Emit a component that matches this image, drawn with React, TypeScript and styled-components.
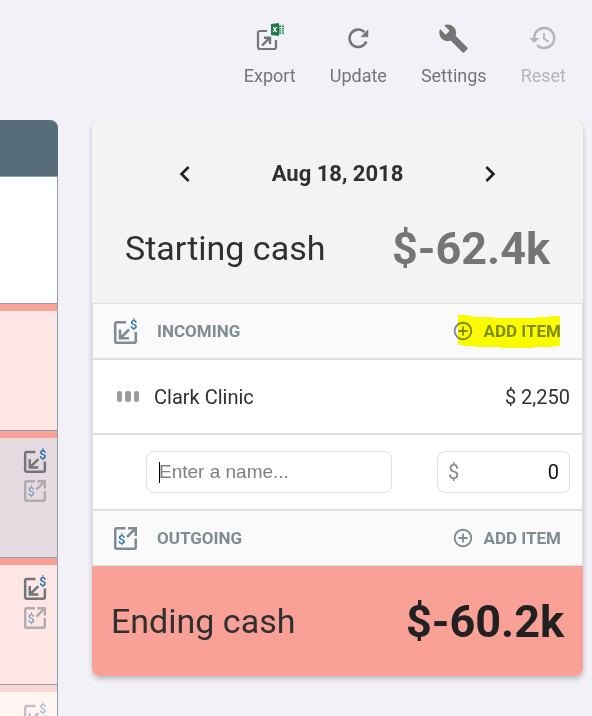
import React from "react";
import styled, { createGlobalStyle } from "styled-components";
import {
  MdAddCircleOutline,
  MdBuild,
  MdChevronLeft,
  MdChevronRight,
  MdHistory,
} from "react-icons/md";

const GlobalStyle = createGlobalStyle`
  * { box-sizing: border-box; }
  body { margin: 0; background: #f2f1f7; font-family: Roboto, "Liberation Sans", sans-serif; color: #303030; }
  button { font: inherit; color: inherit; background: none; border: 0; padding: 0; cursor: pointer; }
  svg { display: block; flex: none; }
`;

const Page = styled.div`
  display: flex;
  flex-direction: column;
  height: 100vh;
  overflow: hidden;
`;

const Toolbar = styled.header`
  display: flex;
  flex: none;
  justify-content: flex-end;
  gap: 34px;
  height: 120px;
  padding: 20px 26px 0 0;
`;

const ToolButton = styled.button`
  && {
    display: flex;
    flex-direction: column;
    align-items: center;
    align-self: flex-start;
    gap: 8px;
    font-size: 18px;
    line-height: 24px;
    color: #757575;
  }
  &&:disabled {
    color: #b5b4b8;
    cursor: default;
  }
`;

const ToolIcon = styled.span`
  display: flex;
  align-items: center;
  justify-content: center;
  height: 36px;
`;

const Main = styled.main`
  display: flex;
  flex: 1;
  align-items: flex-start;
  gap: 34px;
  min-height: 0;
  padding-right: 9px;
`;

const Timeline = styled.section`
  flex: none;
  width: 58px;
  border-radius: 0 8px 0 0;
  overflow: hidden;
`;

const TimelineHead = styled.div`
  height: 56px;
  background: #566e79;
`;

const Day = styled.div<{ $bg: string; $bar?: string; $faded?: boolean }>`
  display: flex;
  flex-direction: column;
  align-items: flex-end;
  gap: 6px;
  height: 127px;
  padding: 17px 11px 0 0;
  border-top: 1px solid #90a0aa;
  border-right: 1px solid #90a0aa;
  background: ${(p) => p.$bg};
  ${(p) => p.$bar && `box-shadow: inset 0 7px 0 ${p.$bar};`}
  svg { opacity: ${(p) => (p.$faded ? 0.4 : 1)}; }
`;

const Panel = styled.section`
  flex: 1;
  border-radius: 8px;
  background: #f3f3f3;
  box-shadow: 0 3px 5px rgba(0, 0, 0, 0.22);
  overflow: hidden;
`;

const PanelHead = styled.div`
  height: 183px;
  padding-top: 34px;
`;

const DateNav = styled.div`
  display: flex;
  align-items: center;
  justify-content: space-between;
  height: 39px;
  padding: 0 77px;
  color: #212121;
`;

const DateTitle = styled.h1`
  margin: 0;
  font-size: 22px;
  line-height: 28px;
  font-weight: 700;
  color: #303030;
`;

const CashRow = styled.div<{ $ending?: boolean }>`
  display: flex;
  align-items: center;
  justify-content: space-between;
  height: 110px;
  padding: 0 ${(p) => (p.$ending ? 19 : 33)}px;
  background: ${(p) => (p.$ending ? "#f9a097" : "transparent")};
`;

const CashLabel = styled.span`
  font-size: 34px;
`;

const CashAmount = styled.strong<{ $color: string }>`
  font-size: 45px;
  font-weight: 700;
  color: ${(p) => p.$color};
`;

const Body = styled.div`
  border: 1px solid #dfdfdf;
  background: #fff;
`;

const SectionHead = styled.div`
  display: flex;
  align-items: center;
  height: 54px;
  padding: 0 21px;
  background: #fafafa;
  color: #7f8c94;
  font-size: 17px;
  font-weight: 700;
`;

const SectionTitle = styled.h2`
  flex: 1;
  margin: 0 0 0 20px;
  font-size: inherit;
  font-weight: inherit;
`;

const AddButton = styled.button`
  && {
    position: relative;
    display: flex;
    align-items: center;
    gap: 10px;
  }
`;

const Marker = styled.svg`
  position: absolute;
  top: -5px;
  right: 1px;
  mix-blend-mode: multiply;
  pointer-events: none;
`;

const ItemRow = styled.div`
  display: flex;
  align-items: center;
  height: 75px;
  padding: 0 12px 0 24px;
  border-top: 2px solid #dfdfdf;
  font-size: 20px;
`;

const ItemName = styled.span`
  flex: 1;
  margin-left: 14px;
`;

const EntryForm = styled.form`
  display: flex;
  gap: 45px;
  height: 78px;
  padding: 16px 12px 0 53px;
  border: solid #dfdfdf;
  border-width: 2px 0;
`;

const Field = styled.label<{ $fixed?: boolean }>`
  position: relative;
  display: flex;
  align-items: center;
  flex: ${(p) => (p.$fixed ? "0 0 133px" : "1")};
  min-width: 0;
  height: 42px;
  padding: 0 ${(p) => (p.$fixed ? 10 : 12)}px;
  border: 1px solid #dfdfdf;
  border-radius: 8px;
  color: #888;
  font-size: 20px;
`;

const Caret = styled.span`
  position: absolute;
  left: 12px;
  top: 10px;
  width: 1px;
  height: 21px;
  background: #000;
`;

const TextInput = styled.input<{ $number?: boolean }>`
  flex: 1;
  width: 0;
  padding: 0;
  border: 0;
  outline: 0;
  background: transparent;
  color: #111;
  font: ${(p) =>
    p.$number ? "20px Roboto, sans-serif" : '19px "Liberation Sans", sans-serif'};
  text-align: ${(p) => (p.$number ? "right" : "left")};
  &::placeholder { color: #808080; opacity: 1; }
`;

type MoneyIconProps = { color: string; size?: number; dollar?: string };

const IncomingIcon = ({ color, size = 23, dollar = "#2a72a8" }: MoneyIconProps) => (
  <svg width={size} height={size + 4} viewBox="0 0 23 27" overflow="visible" aria-hidden="true">
    <g fill="none" stroke={color} strokeWidth="2.6">
      <path d="M12 4.2H3Q1.2 4.2 1.2 6V23Q1.2 24.8 3 24.8H20Q21.8 24.8 21.8 23V14" />
      <path d="M15 11.5L6.5 20M6 11.5V20.3H15" />
    </g>
    <text x="16" y="11" fontSize="13" fontWeight="500" fill={dollar}>$</text>
  </svg>
);

const OutgoingIcon = ({ color, size = 23, dollar = "#2a72a8" }: MoneyIconProps) => (
  <svg width={size} height={size} viewBox="0 0 23 23" aria-hidden="true">
    <g fill="none" stroke={color} strokeWidth="2.6">
      <path d="M11.5 1.2H3Q1.2 1.2 1.2 3V20Q1.2 21.8 3 21.8H20Q21.8 21.8 21.8 20V11.5" />
      <path d="M13 10L21.2 1.8M14 1.2H21.8V9" />
    </g>
    <text x="4" y="17" fontSize="13" fontWeight="500" fill={dollar}>$</text>
  </svg>
);

const ExportIcon = () => (
  <svg width="28" height="32" viewBox="0 0 28 32" aria-hidden="true">
    <g fill="none" stroke="#757575" strokeWidth="2.2">
      <path d="M11 9H4Q2 9 2 11V25Q2 27 4 27H18Q20 27 20 25V18" />
      <path d="M6 23.5L13.5 16M8 15.8H14V22" strokeWidth="2.4" />
    </g>
    <path d="M22 2.5H28V12.5H22Z" fill="#cfe5da" />
    <path d="M23 3.5h2v1.5h-2zM26 3.5h2v1.5h-2zM23 6h2v1.3h-2zM26 6h2v1.3h-2zM23 8.2h2v1.3h-2zM26 8.2h2v1.3h-2zM23 10.5h2v1.3h-2zM26 10.5h2v1.3h-2z" fill="#2b8a5a" />
    <path d="M15 2L23 1V14L15 13Z" fill="#1f7c4d" />
    <path d="M17.2 5L20.5 10M20.5 5L17.2 10" stroke="#fff" strokeWidth="1.3" />
  </svg>
);

const RefreshIcon = () => (
  <svg width="22" height="22" viewBox="0 0 22 22" aria-hidden="true">
    <path d="M17.5 5.2A8.7 8.7 0 1 0 19.3 14.6" fill="none" stroke="#757575" strokeWidth="2.6" />
    <path d="M21 2.8V9.8H14Z" fill="#757575" stroke="#757575" strokeWidth=".6" strokeLinejoin="round" />
  </svg>
);

const GripIcon = () => (
  <svg width="23" height="11" viewBox="0 0 23 11" fill="#9a9a9a" aria-hidden="true">
    <rect width="5" height="11" rx="2" />
    <rect x="8" width="6" height="11" rx="2.5" />
    <rect x="17" width="5" height="11" rx="2" />
  </svg>
);

const tools = [
  { label: "Export", icon: <ExportIcon /> },
  { label: "Update", icon: <RefreshIcon /> },
  { label: "Settings", icon: <MdBuild size={31} /> },
  { label: "Reset", icon: <MdHistory size={30} />, disabled: true },
];

const days = [
  { bg: "#fff" },
  { bg: "#fde6e3", bar: "#f9a097" },
  { bg: "#e5dae0", bar: "#f9a097", icons: true },
  { bg: "#fde6e3", bar: "#f9a097", icons: true },
  { bg: "#fff5f3", bar: "#fcd6d2", icons: true, faded: true },
];

const SectionBar = ({ title, icon, marked }: { title: string; icon: React.ReactNode; marked?: boolean }) => (
  <SectionHead>
    {icon}
    <SectionTitle>{title}</SectionTitle>
    <AddButton type="button">
      <MdAddCircleOutline size={22} />
      ADD ITEM
      {marked && (
        <Marker width="102" height="33" viewBox="0 0 102 33" aria-hidden="true">
          <path
            fill="#ff0"
            d="M0 0H10L16 2H35V3H79V2H92V1H102V31H96V32H75V33H42V32H16V31H6V30H0Z"
          />
        </Marker>
      )}
    </AddButton>
  </SectionHead>
);

export default function App() {
  return (
    <Page>
      <GlobalStyle />
      <Toolbar>
        {tools.map((t) => (
          <ToolButton key={t.label} type="button" disabled={t.disabled}>
            <ToolIcon>{t.icon}</ToolIcon>
            {t.label}
          </ToolButton>
        ))}
      </Toolbar>
      <Main>
        <Timeline>
          <TimelineHead />
          {days.map((d, i) => (
            <Day key={i} $bg={d.bg} $bar={d.bar} $faded={d.faded}>
              {d.icons && (
                <>
                  <IncomingIcon color="#70767a" size={22} dollar="#1769aa" />
                  <OutgoingIcon color="#b1abae" size={22} dollar="#7f9fc6" />
                </>
              )}
            </Day>
          ))}
        </Timeline>
        <Panel>
          <PanelHead>
            <DateNav>
              <button type="button" aria-label="Previous day">
                <MdChevronLeft size={32} />
              </button>
              <DateTitle>Aug 18, 2018</DateTitle>
              <button type="button" aria-label="Next day">
                <MdChevronRight size={32} />
              </button>
            </DateNav>
            <CashRow>
              <CashLabel>Starting cash</CashLabel>
              <CashAmount $color="#757575">$-62.4k</CashAmount>
            </CashRow>
          </PanelHead>
          <Body>
            <SectionBar title="INCOMING" icon={<IncomingIcon color="#7f8c94" />} marked />
            <ItemRow>
              <GripIcon />
              <ItemName>Clark Clinic</ItemName>
              <span>$ 2,250</span>
            </ItemRow>
            <EntryForm>
              <Field>
                <Caret />
                <TextInput placeholder="Enter a name..." aria-label="Item name" />
              </Field>
              <Field $fixed>
                $
                <TextInput $number defaultValue="0" aria-label="Amount" />
              </Field>
            </EntryForm>
            <SectionBar title="OUTGOING" icon={<OutgoingIcon color="#7f8c94" />} />
          </Body>
          <CashRow $ending>
            <CashLabel>Ending cash</CashLabel>
            <CashAmount $color="#212121">$-60.2k</CashAmount>
          </CashRow>
        </Panel>
      </Main>
    </Page>
  );
}
